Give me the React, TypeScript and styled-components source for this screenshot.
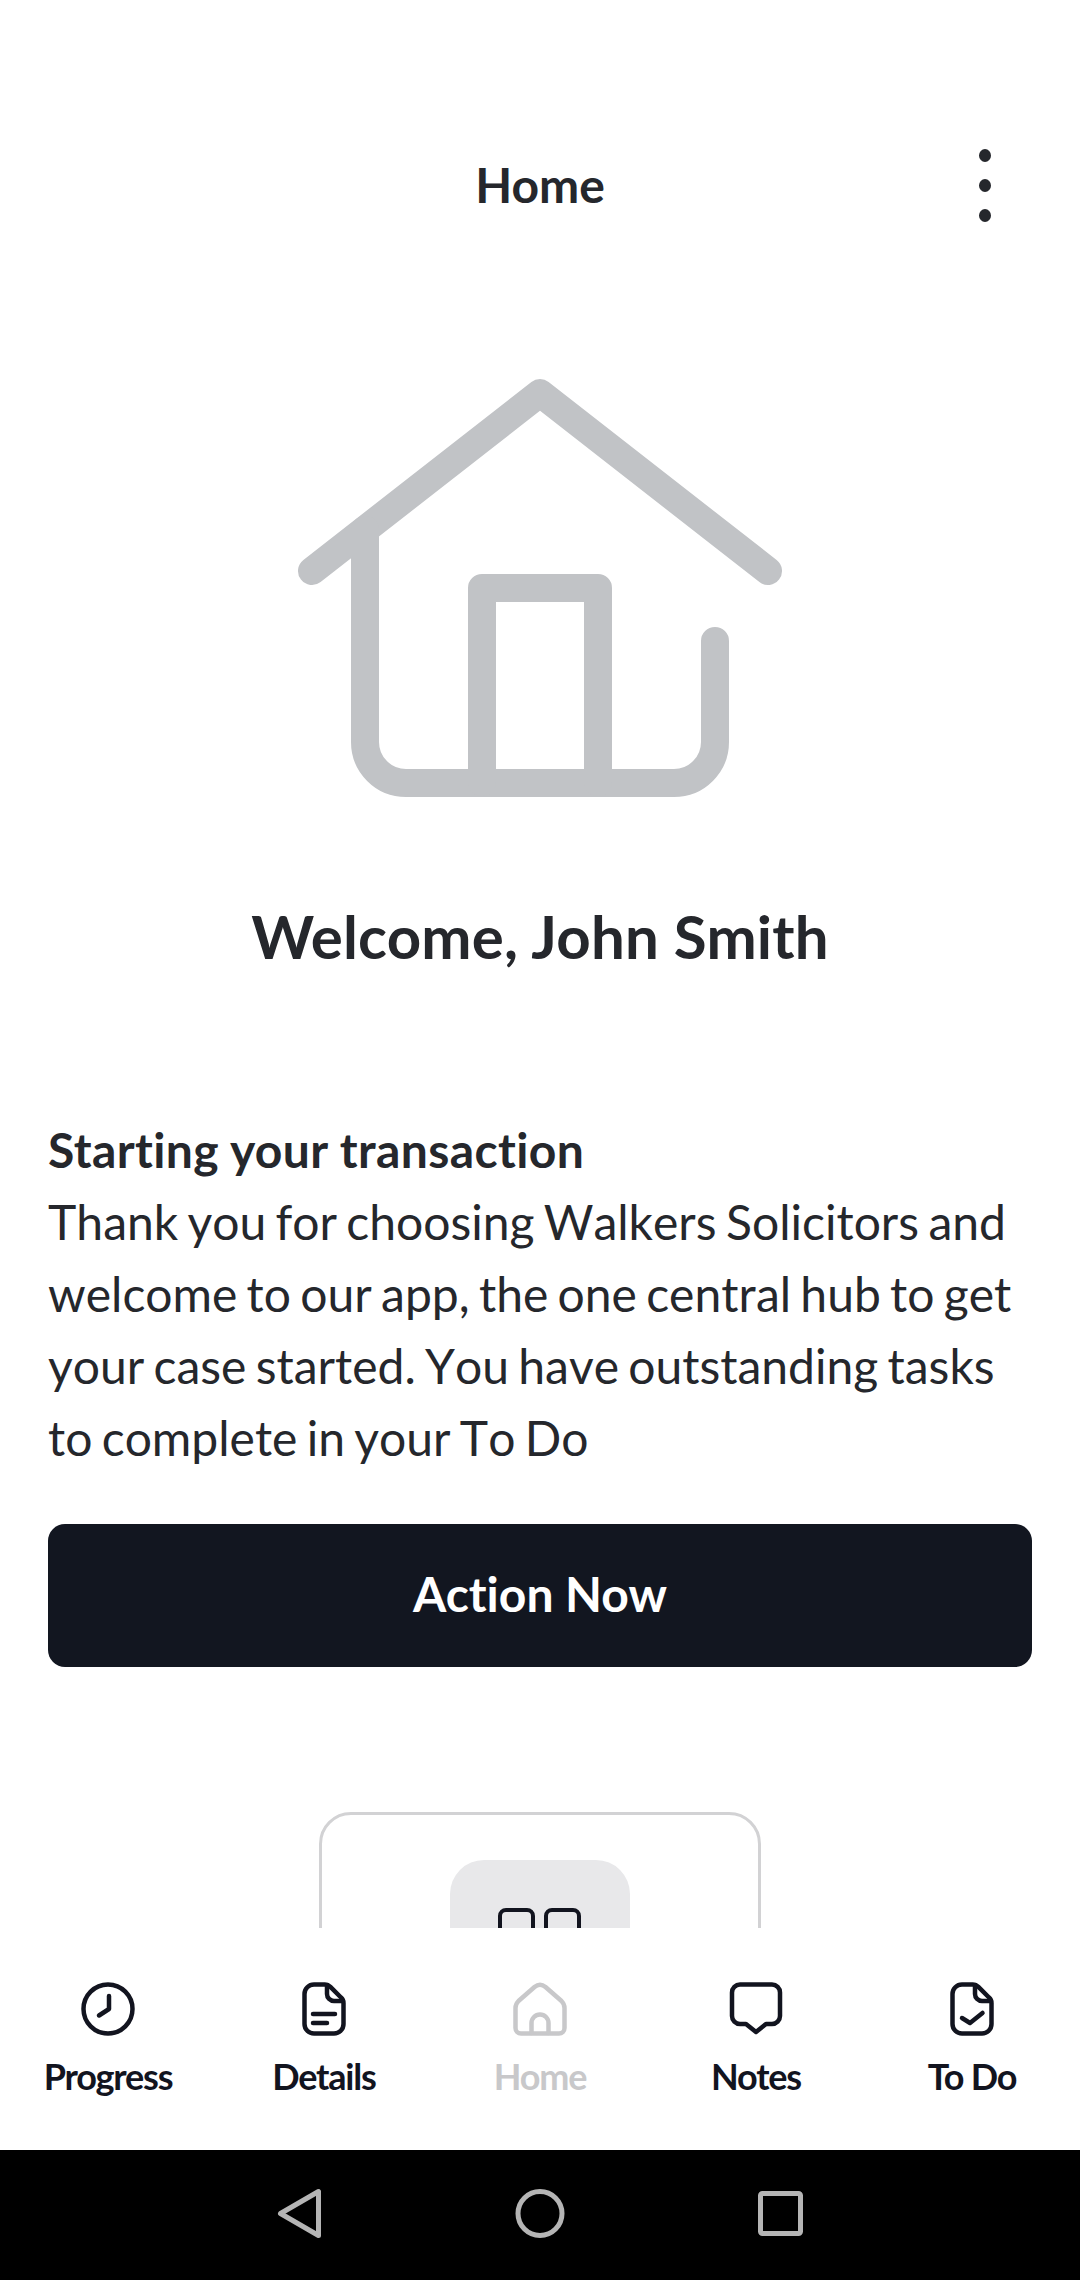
import React from "react";
import styled, { createGlobalStyle } from "styled-components";

const GlobalStyle = createGlobalStyle`
  html, body {
    margin: 0;
    padding: 0;
    background: #fff;
  }
  * {
    box-sizing: border-box;
  }
`;

const Screen = styled.div`
  width: 1080px;
  height: 2280px;
  display: flex;
  flex-direction: column;
  overflow: hidden;
  background: #fff;
  font-family: Lato, "Liberation Sans", sans-serif;
  font-variant-ligatures: none;
  color: #25272c;
`;

const Content = styled.main`
  height: 1928px;
  overflow: hidden;
  flex: none;
`;

const Header = styled.header`
  display: grid;
  grid-template-columns: 1fr auto 1fr;
  align-items: center;
  height: 130px;
  margin-top: 120px;
  padding: 0 89px;
`;

const Title = styled.h1`
  grid-column: 2;
  margin: 0;
  font-size: 48px;
  font-weight: 700;
  line-height: 60px;
`;

const MenuButton = styled.div`
  grid-column: 3;
  justify-self: end;
  display: flex;
  flex-direction: column;
  gap: 17px;
`;

const Dot = styled.span`
  width: 12px;
  height: 13px;
  border-radius: 50%;
  background: #25272c;
`;

const Hero = styled.div`
  display: flex;
  justify-content: center;
  margin-top: 120px;
`;

const Welcome = styled.h2`
  margin: 96px 0 0;
  text-align: center;
  font-size: 60px;
  font-weight: 700;
  line-height: 80px;
  letter-spacing: 0.2px;
`;

const Intro = styled.section`
  margin-top: 138px;
  padding: 0 48px;
  font-size: 48px;
  line-height: 72px;
  font-kerning: none;
  word-spacing: -3px;
`;

const IntroTitle = styled.div`
  font-weight: 700;
  font-kerning: normal;
  word-spacing: 0;
  letter-spacing: 0.4px;
`;

const ActionButton = styled.button`
  display: block;
  width: 984px;
  height: 143px;
  margin: 50px 48px 0;
  padding: 0 0 4px;
  border: none;
  border-radius: 17px;
  background: #121620;
  color: #fff;
  font-family: inherit;
  font-variant-ligatures: none;
  font-size: 48px;
  font-weight: 700;
`;

const Card = styled.div`
  width: 442px;
  height: 320px;
  margin: 145px auto 0;
  padding-top: 45px;
  border: 3px solid #d2d2d4;
  border-radius: 32px;
`;

const CardTile = styled.div`
  width: 180px;
  height: 180px;
  margin: 0 auto;
  padding: 48px 0 0 48px;
  border-radius: 34px;
  background: #e8e8ea;
`;

const TileSquares = styled.div`
  display: flex;
  gap: 9px;
`;

const TileSquare = styled.span`
  width: 37px;
  height: 37px;
  border: 4.5px solid #12141f;
  border-radius: 8px;
`;

const TabBar = styled.nav`
  height: 222px;
  flex: none;
  display: grid;
  grid-template-columns: repeat(5, 216px);
  padding-top: 51px;
  background: #fff;
`;

const Tab = styled.div<{ $muted?: boolean }>`
  display: flex;
  flex-direction: column;
  align-items: center;
  color: ${(props) => (props.$muted ? "#c8c8ca" : "#12141f")};
`;

const TabLabel = styled.span`
  margin-top: 15px;
  font-size: 36px;
  font-weight: 700;
  line-height: 44px;
  letter-spacing: -1.2px;
`;

const SystemBar = styled.div`
  height: 130px;
  flex: none;
  display: flex;
  justify-content: center;
  padding-top: 34px;
  background: #000;
`;

const TabIcon = ({ children }: { children: React.ReactNode }) => (
  <svg
    width="60"
    height="60"
    viewBox="0 0 60 60"
    fill="none"
    stroke="currentColor"
    strokeWidth="4.5"
    strokeLinecap="round"
    strokeLinejoin="round"
  >
    {children}
  </svg>
);

const docOutline =
  "M20 5.5H31C33 5.5 35 6.4 36.4 7.8L47 18.5C48.6 20 49.5 22 49.5 24V45A9.5 9.5 0 0 1 40 54.5H20A9.5 9.5 0 0 1 10.5 45V15A9.5 9.5 0 0 1 20 5.5Z";
const docFold = "M33 6V15A7 7 0 0 0 40 22H49";

const tabs = [
  {
    label: "Progress",
    icon: (
      <>
        <circle cx="30" cy="30" r="24.5" />
        <path d="M31 17V30L21 36.5" />
      </>
    ),
  },
  {
    label: "Details",
    icon: (
      <>
        <path d={docOutline} />
        <path d={docFold} />
        <path d="M19 35H41M19 44H33" />
      </>
    ),
  },
  {
    label: "Home",
    muted: true,
    icon: (
      <>
        <path d="M24.5 8Q30 3.5 35.5 8L51.5 22Q54.5 25 54.5 29V49A5.5 5.5 0 0 1 49 54.5H11A5.5 5.5 0 0 1 5.5 49V29Q5.5 25 8.5 22Z" />
        <path d="M21.5 54V44A8.5 8.5 0 0 1 38.5 44V54" />
      </>
    ),
  },
  {
    label: "Notes",
    icon: (
      <path d="M14 5.5H46A8 8 0 0 1 54 13.5V37A8 8 0 0 1 46 45H40L30 53L20 45H14A8 8 0 0 1 6 37V13.5A8 8 0 0 1 14 5.5Z" />
    ),
  },
  {
    label: "To Do",
    icon: (
      <>
        <path d={docOutline} />
        <path d={docFold} />
        <path d="M20 39L28 44L40.5 34" />
      </>
    ),
  },
];

function App() {
  return (
    <Screen>
      <GlobalStyle />
      <Content>
        <Header>
          <Title>Home</Title>
          <MenuButton>
            <Dot />
            <Dot />
            <Dot />
          </MenuButton>
        </Header>
        <Hero>
          <svg
            width="500"
            height="430"
            viewBox="290 370 500 430"
            fill="none"
            stroke="#c1c3c6"
            strokeWidth="28"
            strokeLinecap="round"
            strokeLinejoin="round"
          >
            <path d="M312 571L540 393L768 571" />
            <path d="M365 530V742A41 41 0 0 0 406 783H674A41 41 0 0 0 715 742V641" />
            <path d="M482 782V588H598V782" />
          </svg>
        </Hero>
        <Welcome>Welcome, John Smith</Welcome>
        <Intro>
          <IntroTitle>Starting your transaction</IntroTitle>
          Thank you for choosing Walkers Solicitors and welcome to our app, the
          one central hub to get your case started. You have outstanding tasks
          to complete in your To Do
        </Intro>
        <ActionButton>Action Now</ActionButton>
        <Card>
          <CardTile>
            <TileSquares>
              <TileSquare />
              <TileSquare />
            </TileSquares>
          </CardTile>
        </Card>
      </Content>
      <TabBar>
        {tabs.map((tab) => (
          <Tab key={tab.label} $muted={tab.muted}>
            <TabIcon>{tab.icon}</TabIcon>
            <TabLabel>{tab.label}</TabLabel>
          </Tab>
        ))}
      </TabBar>
      <SystemBar>
        <svg
          width="540"
          height="60"
          viewBox="270 2185 540 60"
          fill="none"
          stroke="#b5b5b5"
          strokeWidth="5"
          strokeLinejoin="round"
        >
          <path d="M318.5 2192.5V2236.5L280.5 2214.5Z" />
          <circle cx="540" cy="2214.5" r="22" />
          <rect x="760.5" y="2194.5" width="40" height="40" rx="2" />
        </svg>
      </SystemBar>
    </Screen>
  );
}

export default App;
